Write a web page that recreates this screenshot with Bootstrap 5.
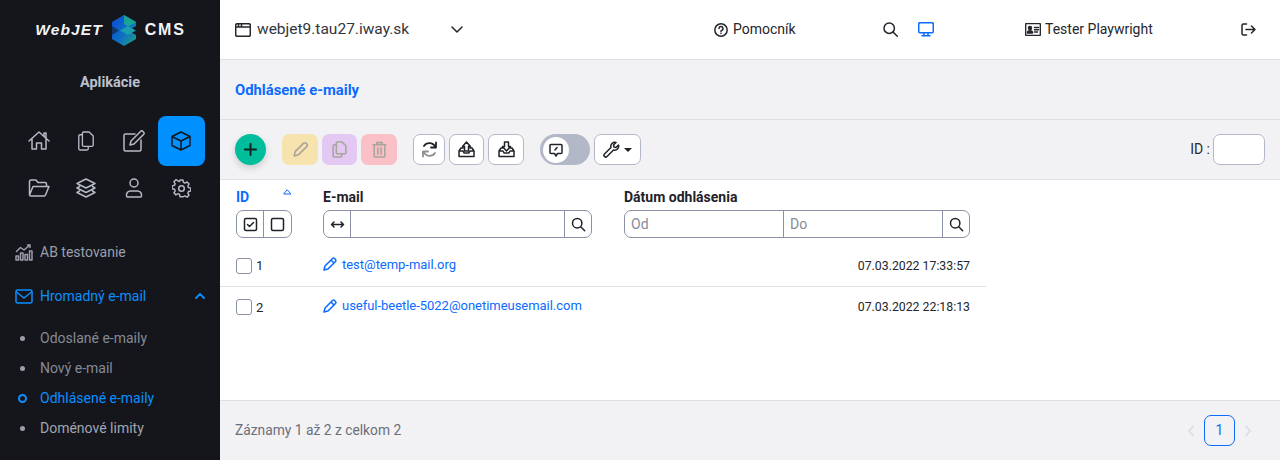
<!DOCTYPE html>
<html lang="sk">
<head>
<meta charset="utf-8">
<title>Odhlásené e-maily</title>
<link href="https://cdn.jsdelivr.net/npm/bootstrap@5.3.0/dist/css/bootstrap.min.css" rel="stylesheet">
<style>
html,body{height:460px;overflow:hidden}
body{font-family:Roboto,sans-serif;font-size:14px;color:#1f2229;background:#fff}
svg{display:block;fill:none;stroke:currentColor;stroke-width:1.5;stroke-linecap:round;stroke-linejoin:round}
.shell{height:460px}
.side{width:220px;background:#14161c;color:#c4c7d0;flex:none}
.logo-row{height:60px;gap:8px;padding-left:1px}
.logo-txt{font-family:"Liberation Sans",sans-serif;font-weight:700;font-size:15.500px;color:#f2f3f5;line-height:1}
.logo-web{font-style:italic;letter-spacing:1.100px}
.logo-cms{letter-spacing:1.800px;font-size:16px}
.side-title{font-weight:700;font-size:14.500px;line-height:20px;margin-top:13px;color:#bcc0cc;text-align:center}
.app-grid{display:grid;grid-template-columns:repeat(4,47.5px);grid-auto-rows:48px;padding:0 15px;margin-top:23px}
.app-cell{display:flex;align-items:center;justify-content:center;color:#b6bac6;border-radius:8px}
.app-cell.on{background:#0090ff;color:#14161c;height:50px}
.app-grid .first-row{height:50px}
.menu-link{display:flex;align-items:center;color:#9b9fab;padding-left:15px;text-decoration:none;font-size:14px;height:20px;margin-top:24px}
.menu-link.first{margin-top:30px}
.menu-link svg{width:18px;height:17px;margin-right:7px;flex:none}
.menu-link.act{color:#0a8fff}
.sub-list{margin-top:17px}
.sub-link{display:flex;align-items:center;height:30px;padding-left:20px;color:#858995;text-decoration:none}
.sub-link i{width:5px;height:5px;border-radius:50%;background:#9b9fab;margin-right:15px;flex:none}
.sub-link.act{color:#0a8fff}
.sub-link.act i{width:9px;height:9px;margin:0 13px 0 -2px;background:none;border:2.2px solid #0a8fff}
.sub-link.lite{color:#a1a5b1}
.top{height:60px;flex:none;border-bottom:1px solid #dfe0e6;background:#fff}
.topbar{display:flex;align-items:center;padding-left:15px;font-size:14px;color:#24262c}
.domain{font-size:15.500px;color:#33353b;margin-left:6px;width:194px}
.title-bar{height:60px;flex:none;background:#f2f2f5;border-bottom:1px solid #dfe0e6;padding:2px 0 0 15px;display:flex;align-items:center;color:#0a6bff;font-weight:700;font-size:14.800px}
.tools{height:60px;flex:none;background:#f2f2f5;border-bottom:1px solid #dfe0e6;padding:0 15px;display:flex;align-items:center}
.tbtn{height:31px;border-radius:7px;border:1px solid #b3b8c8;background:#fff;color:#1f2229;display:flex;align-items:center;justify-content:center;padding:0}
.tbtn svg{width:17px;height:17px}
.add{width:31px;height:31px;border-radius:50%;background:#00bd9c;border:0;box-shadow:0 3px 7px rgba(0,0,0,.16);color:#10231f;margin-right:16px}
.dis{border:0;color:#a9a59c}
.dyel{width:36px;background:#f7e3ad;margin-right:4px}
.dpur{width:35px;background:#e3c8f3;margin-right:4px}
.dred{width:36px;background:#f9c1c7;margin-right:16px}
.sw{width:50px;height:31px;border-radius:16px;background:#b3b8c8;padding:3px;margin-left:16px;margin-right:4px}
.sw span{display:flex;width:26px;height:26px;border-radius:50%;background:#fff;align-items:center;justify-content:center}
.id-in{width:52px;height:31px;border:1px solid #b3b8c8;border-radius:7px;background:#fff;margin-left:3px}
.grid-area{flex:1 1 auto;background:#fff}
.dt{width:766px;table-layout:fixed;margin:0;border-collapse:collapse;--bs-table-bg:transparent}
.dt th{font-weight:700;font-size:14px;line-height:20px;border:0;padding:7px 16px 7px;color:#1f2229;vertical-align:top}
.dt td{border:0;height:41px;padding:1px 16px 0;vertical-align:middle;font-size:13px;white-space:nowrap}
.dt td.when{font-size:12.300px;color:#24262c}
.dt tr.sep td{border-bottom:1px solid #dfe0e6}
.dt a{color:#0a6bff;text-decoration:none;display:inline-flex;align-items:center;letter-spacing:-.03px}
.dt a svg{width:14px;height:14px;margin-right:5px}
.fgroup{display:flex;height:28px;border:1px solid #8a90a6;border-radius:7px;margin-top:3px;background:#fff;overflow:hidden}
.fcell{flex:none;width:27px;display:flex;align-items:center;justify-content:center;color:#1f2229}
.fcell.lead-cell{width:26px}
.fcell svg{width:15px;height:15px}
.fb{border-left:1px solid #8a90a6}
.fin{flex:1 1 0;min-width:0;font-size:14px;font-weight:400;color:#868b9a;padding-left:6px;line-height:26px}
.fchk{width:16px;height:16px;border:1.5px solid #8a90a6;border-radius:3px;display:block;flex:none;background:#fff}
.idhead{position:relative;color:#0a6bff!important}
.sort{position:absolute;left:63px;top:9px;width:9px;height:6px;color:#0a6bff}
.sort svg{width:9px;height:6px;stroke-width:1}
.email-col{padding-left:15px!important;padding-right:16px!important}
.foot{height:60px;flex:none;background:#f2f2f5;border-top:1px solid #dfe0e6;padding:0 15px;display:flex;align-items:center;font-size:13.800px;color:#6a6e7a}
.pg{width:31px;height:31px;border:1px solid #0a6bff;border-radius:7px;color:#0a6bff;display:flex;align-items:center;justify-content:center;margin:0 9px}
.pgn{color:#d9dbe2}
.pgn svg{width:8px;height:12px;stroke-width:1.5}
.pg-end{margin-right:13px}
.top-help{margin-left:251px}
.top-help-label{margin-left:5px;width:150px}
.top-mon{color:#0a6bff;margin-left:20px}
.top-gap{width:91px}
.top-name{margin-left:4px;width:196px;white-space:nowrap}
.id-lab{color:#2b2d33}
.nar{width:32px;margin-right:4px}
.nar2{width:35px;margin-right:4px}
.nar3{width:36px}
.wr{width:47px}
.menu-link svg.chev{width:10px;height:6px;margin:0 15px 0 auto;stroke-width:1.8}
.caret-d{width:0;height:0;border:4px solid transparent;border-top:4px solid #1f2229;border-bottom:0}
.refresh{stroke-width:1.8}
.gr{stroke:#8f8f8f}
.tbtn svg.plus{width:13px;height:13px;stroke-width:2}
.sw svg{width:14px;height:14px}
</style>
</head>
<body>
<div class="shell d-flex">
  <aside class="side d-flex flex-column">
    <div class="logo-row d-flex align-items-center justify-content-center">
      <span class="logo-txt logo-web">WebJET</span>
      <svg width="26" height="31" viewBox="0 0 26 31" style="stroke:none">
        <defs><linearGradient id="lg" x1="0" y1="0" x2="1" y2="1"><stop offset="0" stop-color="#0a49d8"/><stop offset=".55" stop-color="#0f6fc4"/><stop offset="1" stop-color="#1fa67a"/></linearGradient></defs>
        <path d="M13 0 25 7v17l-12 7L1 24V7Z" fill="url(#lg)" stroke="none"/>
        <path d="M13 0l12 7-8 4.500L13 9Z" fill="#1bb38a" stroke="none" opacity=".8"/>
        <path d="M9 15.500 17 11l8 4.500-8 4.500Z" fill="#1b9fb0" stroke="none"/>
        <path d="M25 11l-4 2.200 4 2.300ZM25 15.500l-4 2.300 4 2.200Z" fill="#14161c" stroke="none"/>
        <path d="M1 11l7 4.500-7 4.500Z" fill="#14161c" stroke="none" opacity=".55"/>
      </svg>
      <span class="logo-txt logo-cms">CMS</span>
    </div>
    <div class="side-title">Aplikácie</div>
    <div class="app-grid">
      <div class="app-cell first-row"><svg width="22" height="22" viewBox="0 0 22 22"><path d="M1 11 11 2l10 9M4 9v10h4.500v-6h5v6H18V9M16 6V3h2v5"/></svg></div>
      <div class="app-cell first-row"><svg width="18" height="20" viewBox="0 0 20 22"><path d="M6 4H3.500A1.500 1.500 0 0 0 2 5.500v14A1.500 1.500 0 0 0 3.500 21H11a1.500 1.500 0 0 0 1.500-1.500V17M7.500 1h6L18 5.500V15.500A1.500 1.500 0 0 1 16.500 17h-9A1.500 1.500 0 0 1 6 15.500v-13A1.500 1.500 0 0 1 7.500 1Z"/></svg></div>
      <div class="app-cell first-row"><svg width="22" height="22" viewBox="0 0 22 22"><path d="M12 4H2.500A1.500 1.500 0 0 0 1 5.500v14A1.500 1.500 0 0 0 2.500 21h14a1.500 1.500 0 0 0 1.500-1.500V10M8 11l9.500-9.500a1.500 1.500 0 0 1 2.500 0l.5.500a1.500 1.500 0 0 1 0 2.500L11 14l-4 1Z"/></svg></div>
      <div class="app-cell on"><svg width="20" height="20" viewBox="0 0 20 20"><path d="M10 1 19 5.500v9L10 19l-9-4.500v-9ZM1 5.500 10 10l9-4.500M10 10v9"/></svg></div>
      <div class="app-cell"><svg width="22" height="18" viewBox="0 0 22 18"><path d="M1.500 16V2.500A1.500 1.500 0 0 1 3 1h5l2 2.500h7A1.500 1.500 0 0 1 18.500 5v2.500M1.500 16 5 7.500h16L17.500 16a1.500 1.500 0 0 1-1.300 1H3a1.500 1.500 0 0 1-1.500-1Z"/></svg></div>
      <div class="app-cell"><svg width="20" height="20" viewBox="0 0 20 20"><path d="M10 1 19 5.500 10 10 1 5.500ZM3.500 8.500 1 10l9 4.500 9-4.500-2.500-1.500M3.500 13 1 14.500 10 19l9-4.500L16.500 13"/></svg></div>
      <div class="app-cell"><svg width="18" height="20" viewBox="0 0 18 20"><circle cx="9" cy="5" r="4"/><path d="M1.500 17.500A4 4 0 0 1 5.500 13h7a4 4 0 0 1 4 4.500v.5a1 1 0 0 1-1 1h-13a1 1 0 0 1-1-1Z"/></svg></div>
      <div class="app-cell"><svg width="19" height="19" viewBox="0 0 19 19"><circle cx="9.500" cy="9.500" r="2.800"/><path d="M8 1h3l.5 2.400 1.500.7 2.200-1.200 2 2.100-1.200 2.100.6 1.500 2.400.6v2.900l-2.400.6-.6 1.500 1.200 2.100-2 2.100-2.200-1.200-1.500.7L11 18H8l-.5-2.400-1.500-.7-2.200 1.200-2-2.100L3 11.900l-.6-1.500L0 9.800V6.900l2.400-.6.6-1.500-1.200-2.100 2-2.100L6 1.800l1.500.7Z" transform="translate(.2 .1) scale(.98)"/></svg></div>
    </div>
    <a class="menu-link first" href="#"><svg viewBox="0 0 18 17" stroke-width="1.200"><path d="M1.500 7.500l4-4 3.500 2.500 6-5M12.500 1H15v2.500"/><rect x="1" y="12" width="2.500" height="4"/><rect x="5.500" y="9" width="2.500" height="7"/><rect x="10" y="10.500" width="2.500" height="5.500"/><rect x="14.500" y="7" width="2.500" height="9"/></svg>AB testovanie</a>
    <a class="menu-link act" href="#"><svg viewBox="0 0 18 17"><rect x="1" y="2" width="16" height="13" rx="1.500"/><path d="M1.500 4 9 10l7.500-6"/></svg>Hromadný e-mail<svg class="chev" viewBox="0 0 10 6"><path d="M1 5l4-4 4 4"/></svg></a>
    <div class="sub-list">
      <a class="sub-link" href="#"><i></i>Odoslané e-maily</a>
      <a class="sub-link" href="#"><i></i>Nový e-mail</a>
      <a class="sub-link act" href="#"><i></i>Odhlásené e-maily</a>
      <a class="sub-link lite" href="#"><i></i>Doménové limity</a>
    </div>
  </aside>
  <main class="flex-grow-1 d-flex flex-column" style="min-width:0">
    <div class="top topbar">
      <svg width="16" height="14" viewBox="0 0 16 14" stroke-width="1.300"><rect x=".7" y=".7" width="14.600" height="12.600" rx="1.500"/><path d="M.7 4h14.600M3.500 .7v3.300M6.500 .7v3.300"/></svg>
      <span class="domain">webjet9.tau27.iway.sk</span>
      <svg width="12" height="7" viewBox="0 0 12 7"><path d="M1 1l5 5 5-5"/></svg>
      <svg class="top-help" width="14" height="14" viewBox="0 0 14 14" stroke-width="1.200"><circle cx="7" cy="7" r="6.200"/><path d="M5 5.500A2 2 0 1 1 7.500 7.400c-.4.200-.5.500-.5 1M7 10.300v.1"/></svg>
      <span class="top-help-label">Pomocník</span>
      <svg width="15" height="15" viewBox="0 0 15 15" stroke-width="1.300"><circle cx="6.200" cy="6.200" r="5.200"/><path d="M10 10l4.300 4.300"/></svg>
      <svg class="top-mon" width="16" height="15" viewBox="0 0 16 15" stroke-width="1.300"><rect x=".7" y=".7" width="14.600" height="10" rx="1.200"/><path d="M6 11v2M10 11v2M4 13.800h8"/></svg>
      <span class="top-gap"></span>
      <svg width="16" height="13" viewBox="0 0 16 13" stroke-width="1.100"><rect x=".6" y=".6" width="14.800" height="11.800" rx="1"/><circle cx="5" cy="5" r="1.500" fill="currentColor"/><path d="M2.500 10c0-3 5-3 5 0Z" fill="currentColor"/><path d="M9.500 4.500h4M9.500 6.800h4M9.500 9h3"/></svg>
      <span class="top-name">Tester Playwright</span>
      <svg width="15" height="13" viewBox="0 0 15 13" stroke-width="1.300"><path d="M5.500 1H2.500A1.500 1.500 0 0 0 1 2.500v8A1.500 1.500 0 0 0 2.500 12h3M5 6.500h9M10.500 3l3.500 3.500-3.500 3.500"/></svg>
    </div>
    <div class="title-bar">Odhlásené e-maily</div>
    <div class="tools">
      <button class="tbtn add" aria-label="Pridať"><svg class="plus" viewBox="0 0 13 13"><path d="M6.500 1v11M1 6.500h11"/></svg></button>
      <button class="tbtn dis dyel" aria-label="Upraviť"><svg viewBox="0 0 16 16" stroke-width="1.200"><path d="M2 14l1-4L11 2a1.400 1.400 0 0 1 2 0l1 1a1.400 1.400 0 0 1 0 2L6 13Z"/></svg></button>
      <button class="tbtn dis dpur" aria-label="Duplikovať"><svg viewBox="0 0 16 16" stroke-width="1.200"><path d="M5 3.500H3A1 1 0 0 0 2 4.500v9.500a1 1 0 0 0 1 1h6a1 1 0 0 0 1-1v-2M6 1h4.500L14 4.500V11a1 1 0 0 1-1 1H6a1 1 0 0 1-1-1V2a1 1 0 0 1 1-1Z"/></svg></button>
      <button class="tbtn dis dred" aria-label="Zmazať"><svg viewBox="0 0 16 16" stroke-width="1.200"><path d="M2 3.500h12M5.500 3.500V1.500h5v2M3 3.500V14a1 1 0 0 0 1 1h8a1 1 0 0 0 1-1V3.500M6.500 6.500v6M9.500 6.500v6"/></svg></button>
      <button class="tbtn nar" aria-label="Obnoviť"><svg class="refresh" viewBox="0 0 17 17"><path d="M14.500 6.500A6.500 6.500 0 0 0 3 5M15 1.500v5h-5"/><path class="gr" d="M2.500 10.500A6.500 6.500 0 0 0 14 12M2 15.500v-5h5"/></svg></button>
      <button class="tbtn nar2" aria-label="Export"><svg viewBox="0 0 17 17" stroke-width="1.300"><path d="M1 10h4l1 2h5l1-2h4v5.500H1ZM1 10l2-3h2M16 10l-2-3h-2M4.500 5.500 8.500 1l4 4.500H10.500V10h-4V5.500Z"/></svg></button>
      <button class="tbtn nar3" aria-label="Import"><svg viewBox="0 0 17 17" stroke-width="1.300"><path d="M1 10h4l1 2h5l1-2h4v5.500H1ZM1 10l2-3h2M16 10l-2-3h-2M4.500 5.500 8.500 10l4-4.500H10.500V1h-4v4.500Z"/></svg></button>
      <div class="sw"><span><svg viewBox="0 0 14 14" stroke-width="1.200"><path d="M2 1.500h10a1 1 0 0 1 1 1v7a1 1 0 0 1-1 1H8.500L7 13l-1.500-2.500H2a1 1 0 0 1-1-1v-7a1 1 0 0 1 1-1ZM6 7l2-2.500"/></svg></span></div>
      <button class="tbtn gap-1 wr" aria-label="Nastavenia"><svg viewBox="0 0 17 17" stroke-width="1.200"><path d="M1.500 13 8 6.500a4 4 0 0 1 5-5l-2.500 2.500 .5 2 2 .5L15.500 4a4 4 0 0 1-5 5L4 15.500a1.700 1.700 0 0 1-2.500-2.500Z"/></svg><span class="caret-d"></span></button>
      <span class="ms-auto id-lab">ID :</span>
      <div class="id-in"></div>
    </div>
    <div class="grid-area">
      <table class="table dt">
        <colgroup><col style="width:88px"><col style="width:300px"><col></colgroup>
        <thead>
          <tr>
            <th class="idhead">ID<span class="sort"><svg viewBox="0 0 9 6"><path d="M1 5h7L4.500 1Z"/></svg></span>
              <div class="fgroup"><span class="fcell lead-cell"><svg viewBox="0 0 15 15" stroke-width="1.300"><rect x="1.500" y="1.500" width="12" height="12" rx="1.500"/><path d="M4.500 7.500l2 2 4-4"/></svg></span><span class="fcell fb flex-grow-1"><svg viewBox="0 0 15 15" stroke-width="1.300"><rect x="1.500" y="1.500" width="12" height="12" rx="1.500"/></svg></span></div>
            </th>
            <th class="email-col">E-mail
              <div class="fgroup"><span class="fcell lead-cell"><svg viewBox="0 0 15 15" stroke-width="1.200"><path d="M1.500 7.500h12M4 5 1.500 7.500 4 10M11 5l2.500 2.500L11 10"/></svg></span><span class="fin fb"></span><span class="fcell fb"><svg viewBox="0 0 15 15" stroke-width="1.300"><circle cx="6.200" cy="6.200" r="4.700"/><path d="M9.700 9.700l4 4"/></svg></span></div>
            </th>
            <th>Dátum odhlásenia
              <div class="fgroup"><span class="fin">Od</span><span class="fin fb">Do</span><span class="fcell fb"><svg viewBox="0 0 15 15" stroke-width="1.300"><circle cx="6.200" cy="6.200" r="4.700"/><path d="M9.700 9.700l4 4"/></svg></span></div>
            </th>
          </tr>
        </thead>
        <tbody>
          <tr class="sep">
            <td><span class="d-flex align-items-center gap-1"><span class="fchk"></span><span>1</span></span></td>
            <td class="email-col"><a href="#"><svg viewBox="0 0 14 14" stroke-width="1.200"><path d="M1 13l1-4L9.500 1.500a1.400 1.400 0 0 1 2 0l1 1a1.400 1.400 0 0 1 0 2L5 12ZM8 3l3 3"/></svg>test@temp-mail.org</a></td>
            <td class="text-end when">07.03.2022 17:33:57</td>
          </tr>
          <tr>
            <td><span class="d-flex align-items-center gap-1"><span class="fchk"></span><span>2</span></span></td>
            <td class="email-col"><a href="#"><svg viewBox="0 0 14 14" stroke-width="1.200"><path d="M1 13l1-4L9.500 1.500a1.400 1.400 0 0 1 2 0l1 1a1.400 1.400 0 0 1 0 2L5 12ZM8 3l3 3"/></svg>useful-beetle-5022@onetimeusemail.com</a></td>
            <td class="text-end when">07.03.2022 22:18:13</td>
          </tr>
        </tbody>
      </table>
    </div>
    <div class="foot">
      <span>Záznamy 1 až 2 z celkom 2</span>
      <span class="ms-auto pgn"><svg viewBox="0 0 8 12"><path d="M6 1.500 2 6l4 4.500"/></svg></span>
      <span class="pg">1</span>
      <span class="pgn pg-end"><svg viewBox="0 0 8 12"><path d="M2 1.500 6 6l-4 4.500"/></svg></span>
    </div>
  </main>
</div>
<script src="https://cdn.jsdelivr.net/npm/bootstrap@5.3.0/dist/js/bootstrap.bundle.min.js"></script>
</body>
</html>
